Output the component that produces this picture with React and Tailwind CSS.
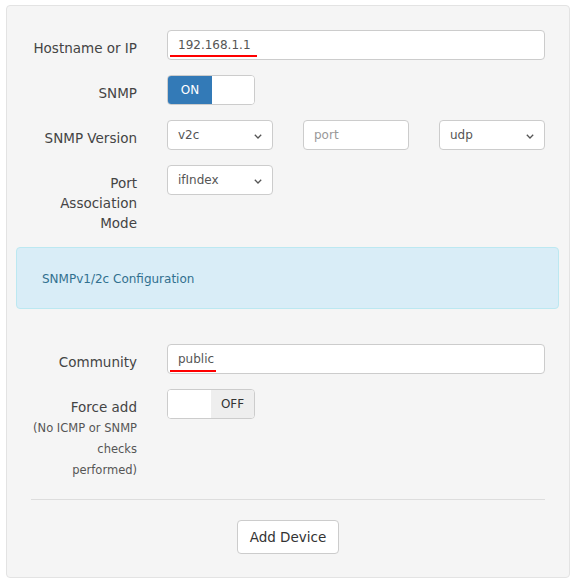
import React from 'react';

const font = "font-['DejaVu_Sans',_'Liberation_Sans',_sans-serif]";

// chevron used by the native-looking selects
const Chevron = () => (
  <svg width="8" height="5" viewBox="0 0 8 5" className="absolute right-[10px] top-[13px]">
    <path d="M0.8 0.8 L4 4 L7.2 0.8" fill="none" stroke="#555" strokeWidth="1.3" />
  </svg>
);

const Select = ({ value }) => (
  <div className="relative h-[30px] w-full rounded-[4px] border border-[#ccc] bg-white pl-[10px] text-[12px] leading-[29px] text-[#555]">
    {value}
    <Chevron />
  </div>
);

const TextInput = ({ value, placeholder, mark, markTop }) => (
  <div className="relative h-[30px] w-full rounded-[4px] border border-[#ccc] bg-white pl-[10px] text-[12px] leading-[29px]">
    {value ? <span className="text-[#555]">{value}</span> : <span className="text-[#999]">{placeholder}</span>}
    {mark && (
      <span
        className="absolute left-[2px] h-[2px] bg-[#ff0000]"
        style={{ width: mark, top: markTop }}
      />
    )}
  </div>
);

const Toggle = ({ on }) => (
  <div className="flex h-[30px] w-[88px] overflow-hidden rounded-[4px] border border-[#ccc] bg-white text-[12px] leading-[29px]">
    {on ? (
      <>
        <div className="w-[44px] bg-[#337ab7] text-center text-white">ON</div>
        <div className="flex-1 bg-white" />
      </>
    ) : (
      <>
        <div className="w-[43px] bg-white" />
        <div className="flex-1 bg-[#eee] text-center text-[#333]">OFF</div>
      </>
    )}
  </div>
);

const Row = ({ label, children, className = '' }) => (
  <div className={`grid grid-cols-[136px_408px] ${className}`}>
    <div className="pr-[15px] pt-[8px] text-right text-[13.5px] leading-[20px] text-[#444]">{label}</div>
    <div className="px-[15px]">{children}</div>
  </div>
);

export default function App() {
  return (
    <div className={`${font} pl-[6px] pt-[5px]`}>
      <div className="h-[573px] w-[564px] rounded-[4px] border border-[#e3e3e3] bg-[#f5f5f5] px-[9px] pt-[24px]">
        <Row label="Hostname or IP" className="mb-[15px]">
          <TextInput value="192.168.1.1" mark={87} markTop={24} />
        </Row>

        <Row label="SNMP" className="mb-[15px]">
          <Toggle on />
        </Row>

        <div className="mb-[15px] grid grid-cols-[136px_136px_136px_136px]">
          <div className="pr-[15px] pt-[8px] text-right text-[13.5px] leading-[20px] text-[#444]">SNMP Version</div>
          <div className="px-[15px]">
            <Select value="v2c" />
          </div>
          <div className="px-[15px]">
            <TextInput placeholder="port" />
          </div>
          <div className="px-[15px]">
            <Select value="udp" />
          </div>
        </div>

        <div className="mb-[14px] grid grid-cols-[136px_136px]">
          <div className="pr-[15px] pt-[8px] text-right text-[13.5px] leading-[20px] text-[#444]">
            Port
            <br />
            Association
            <br />
            Mode
          </div>
          <div className="px-[15px]">
            <Select value="ifIndex" />
          </div>
        </div>

        <div className="mb-[35px] flex h-[62px] w-[543px] items-center rounded-[4px] border border-[#bce8f1] bg-[#d9edf7] pl-[25px] pt-[2px] text-[12px] text-[#31708f]">
          SNMPv1/2c Configuration
        </div>

        <Row label="Community" className="mb-[15px]">
          <TextInput value="public" mark={46} markTop={25} />
        </Row>

        <div className="grid grid-cols-[136px_408px]">
          <div className="pr-[15px] pt-[8px] text-right text-[#444]">
            <div className="text-[13.5px] leading-[20px]">Force add</div>
            <div className="mt-[1px] text-[11.5px] leading-[21px] text-[#555]">
              (No ICMP or SNMP
              <br />
              checks
              <br />
              performed)
            </div>
          </div>
          <div className="px-[15px]">
            <Toggle />
          </div>
        </div>

        <hr className="mx-[15px] mt-[18px] border-0 border-t border-[#ddd]" />

        <div className="mt-[20px] flex justify-center">
          <button className="h-[34px] rounded-[4px] border border-[#ccc] bg-white px-[12px] pt-[1px] text-[13.5px] text-[#333]">
            Add Device
          </button>
        </div>
      </div>
    </div>
  );
}
